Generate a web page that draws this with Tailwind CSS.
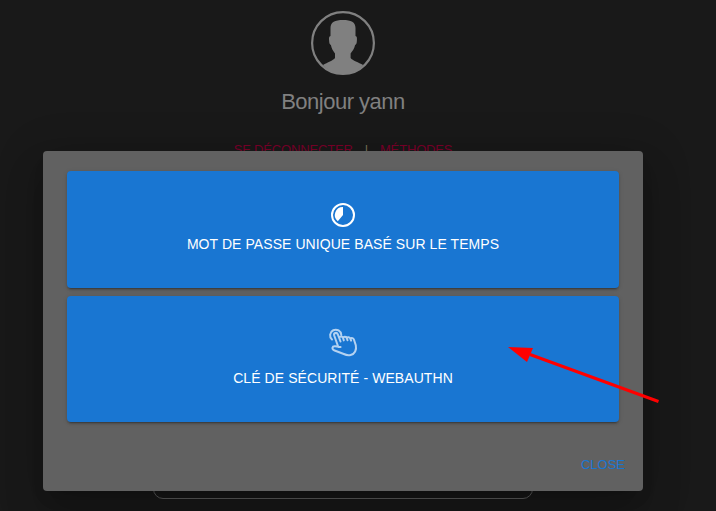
<!DOCTYPE html>
<html lang="fr">
<head>
<meta charset="utf-8">
<title>Authentification</title>
<script src="https://cdn.jsdelivr.net/npm/@tailwindcss/browser@4"></script>
</head>
<body class="relative h-[511px] w-[716px] overflow-hidden bg-[#191919] font-['Liberation_Sans',Arial,sans-serif]">
<main class="flex h-[511px] w-[686px] flex-col items-center pt-[11px]">
  <svg class="h-16 w-16 shrink-0" viewBox="0 0 64 64" fill="#808080">
    <path d="M19.500 17C19.500 11 24 9 32 9s12.500 2 12.500 8v8c1.600.5 1.600 2 1.400 4.500-.2 3-.6 4-1.800 4.500-.7 3.500-2.600 6-4.500 8.500V47c2 2.500 8 4.500 12.500 7C46 61 39 63 32 63s-14-2-20-9c4.500-2.500 10-4.500 12-7v-4.500c-1.900-2.500-3.400-5-4.100-8.500-1.200-.5-1.600-1.500-1.800-4.500-.2-2.500-.2-4 1.400-4.500Z"/>
    <circle cx="32" cy="32" r="30.900" fill="none" stroke="#808080" stroke-width="2.200"/>
  </svg>
  <h1 class="mt-[11px] h-8 text-[22px] leading-8 tracking-[-0.5px] whitespace-nowrap text-[#808080]">Bonjour yann</h1>
  <nav class="mt-[22px] flex h-[20px] text-[13px] leading-[20px] tracking-[-0.16px] whitespace-nowrap text-[#7a0029]">
    <span>SE DÉCONNECTER</span><span class="mx-[12px] text-[#77755a]">|</span><span>MÉTHODES</span>
  </nav>
  <section class="mt-[49px] h-[290px] w-[380px] shrink-0 rounded-[10px] border border-[#5f5f5f]"></section>
</main>

<div role="dialog" class="absolute top-[151px] left-[43px] flex h-[340px] w-[600px] flex-col rounded-[4px] bg-[#616161] px-6 pt-5 shadow-[0_11px_15px_-7px_rgba(0,0,0,0.2),0_24px_38px_3px_rgba(0,0,0,0.14),0_9px_46px_8px_rgba(0,0,0,0.12)]">
  <button class="flex h-[117px] shrink-0 flex-col items-center rounded-[4px] bg-[#1976d2] pt-8 text-[14px] text-white shadow-[0_3px_1px_-2px_rgba(0,0,0,0.2),0_2px_2px_0_rgba(0,0,0,0.14),0_1px_5px_0_rgba(0,0,0,0.12)]">
    <svg class="h-6 w-6" viewBox="0 0 24 24">
      <circle cx="12" cy="12" r="11" fill="none" stroke="#fff" stroke-width="2"/>
      <path d="M12 4v8l-5.200 6.200A8 8 0 0 1 12 4Z" fill="#fff"/>
    </svg>
    <span class="mt-[5px] leading-6 tracking-[0.07px] whitespace-nowrap">MOT DE PASSE UNIQUE BASÉ SUR LE TEMPS</span>
  </button>
  <button class="mt-2 flex h-[126px] shrink-0 flex-col items-center rounded-[4px] bg-[#1976d2] pt-[31px] text-[14px] text-white shadow-[0_3px_1px_-2px_rgba(0,0,0,0.2),0_2px_2px_0_rgba(0,0,0,0.14),0_1px_5px_0_rgba(0,0,0,0.12)]">
    <svg class="h-8 w-8" viewBox="0 0 32 32" fill="none" stroke="#b4d2f1" stroke-width="2" stroke-linecap="round" stroke-linejoin="round">
      <path d="M5 12.500A5.600 5.600 0 1 1 14.300 8"/>
      <path d="M11.300 20 7.200 8.500c-.8-2.600 2.500-3.600 3.500-1.300l2.800 7.300-1.300-3.700c.6-1.900 3.100-1.700 3.800 0l.8 2.600-.8-2.600c.7-1.600 3.200-1.300 3.800.3l.7 2.200-.7-2.100c.8-1.400 3-1 3.600.5l.7 1.900-.7-1.800c1.200-1.400 3-.7 3.600 1l1.800 5.500c1 4.500-1 8.700-5.200 9.700-2.600.7-4.800 0-6.800-1l-9.200-3.500c-3.300-1.300-2.500-4.600.5-4.300l5.400.8Z"/>
    </svg>
    <span class="mt-[7px] leading-6 tracking-[0.07px] whitespace-nowrap">CLÉ DE SÉCURITÉ - WEBAUTHN</span>
  </button>
  <button class="mt-[34px] -mr-[6px] self-end text-[13px] leading-[18px] text-[#1976d2]">CLOSE</button>
</div>

<svg class="pointer-events-none absolute top-0 left-0 h-[511px] w-[716px]" viewBox="0 0 716 511">
  <path d="M530 354.500 658.500 401.500" stroke="#f00" stroke-width="3"/>
  <path d="m508 347 25 1-6 14Z" fill="#f00"/>
</svg>
</body>
</html>
